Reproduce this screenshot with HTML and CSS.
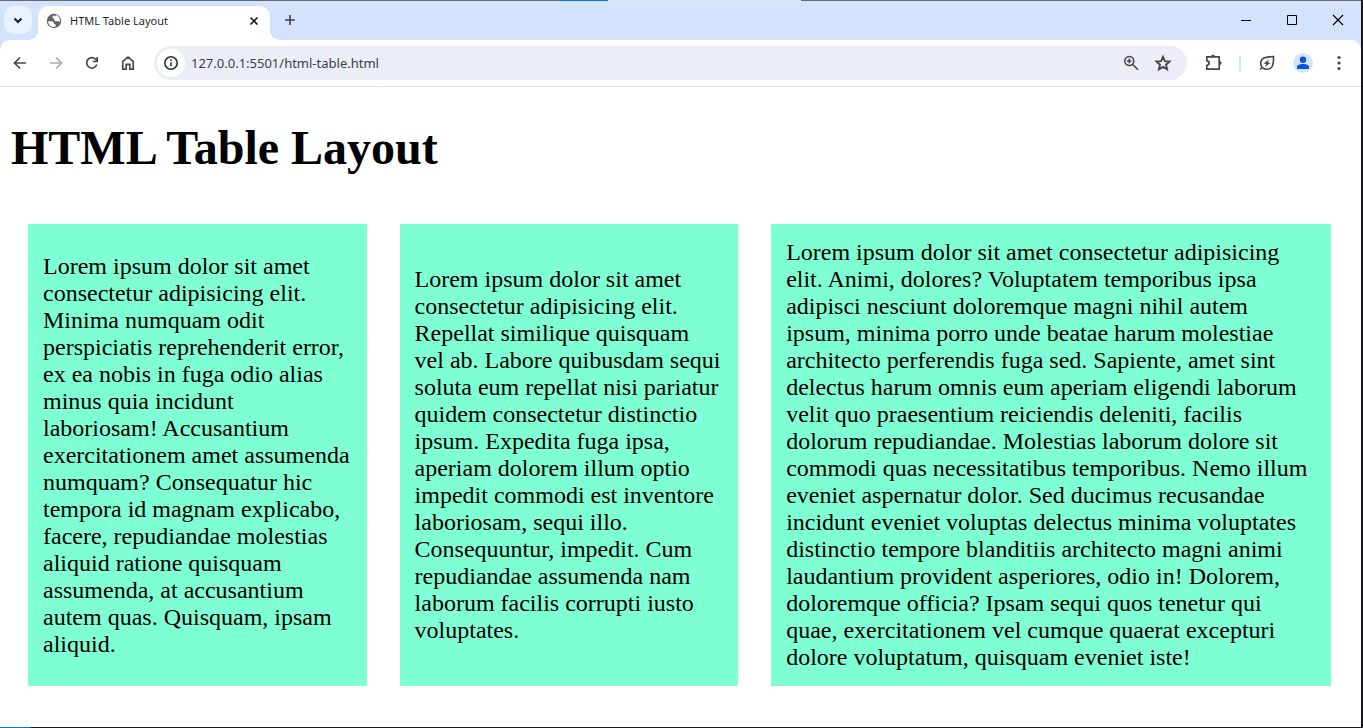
FILE: index.html
```html
<!DOCTYPE html>
<html lang="en">
<head>
<meta charset="utf-8">
<title>HTML Table Layout</title>
<link rel="stylesheet" href="styles.css">
</head>
<body>
<div class="window">
  <div class="desktop-strip"><span class="strip-accent"></span><span class="strip-light"></span></div>
  <header class="tab-bar">
    <button class="tab-search" aria-label="Search tabs"><svg width="28" height="28" viewBox="0 0 28 28"><path d="M10.500 12.500l3.500 3.500 3.500-3.500" fill="none" stroke="#1f1f1f" stroke-width="2"/></svg></button>
    <div class="tab">
      <svg width="16" height="16" viewBox="0 0 16 16"><circle cx="8" cy="8" r="7.200" fill="#5f6368"/><path d="M2 8.300h3.500c1.600 0 2.300.8 2.300 2v.7h1.700v2.800c-3 1-7.200-1-7.500-5.500zM7.800 2.200C6.800 3 6.300 3.700 6.500 4.700c.2.800.9 1.100 1.900 1.100v1.500c0 1 1.200 1 2.300 1h2c.6 0 1.100.3 1.300.9.500-3.800-1.800-6.500-4-7.100-.2 1-1.200 1.200-2 1.200z" fill="#fff"/></svg>
      <span class="tab-title">HTML Table Layout</span>
      <button class="tab-close" aria-label="Close tab"><svg width="16" height="16" viewBox="0 0 16 16"><path d="M4.500 4.500l7 7m0-7l-7 7" stroke="#1f1f1f" stroke-width="1.700"/></svg></button>
    </div>
    <button class="new-tab" aria-label="New tab"><svg width="20" height="20" viewBox="0 0 20 20"><path d="M10 5v10M5 10h10" stroke="#3c4043" stroke-width="1.600"/></svg></button>
    <div class="window-controls">
      <button class="control" aria-label="Minimize"><svg width="12" height="12" viewBox="0 0 12 12"><path d="M1 6.500h10" stroke="#000"/></svg></button>
      <button class="control" aria-label="Maximize"><svg width="12" height="12" viewBox="0 0 12 12"><path d="M1.500 1.500h9v9h-9z" fill="none" stroke="#000"/></svg></button>
      <button class="control" aria-label="Close"><svg width="12" height="12" viewBox="0 0 12 12"><path d="M1 1l10 10M11 1L1 11" stroke="#000" stroke-width="1.200"/></svg></button>
    </div>
  </header>
  <nav class="toolbar" aria-label="Browser toolbar">
    <button class="tool" aria-label="Back"><svg width="20" height="20" viewBox="0 0 20 20"><path d="M16 10H5m5-5.500L4.500 10l5.500 5.500" fill="none" stroke="#474747" stroke-width="1.700"/></svg></button>
    <button class="tool" aria-label="Forward" disabled><svg width="20" height="20" viewBox="0 0 20 20"><path d="M4 10h11m-5-5.500l5.500 5.500-5.500 5.500" fill="none" stroke="#aaa" stroke-width="1.700"/></svg></button>
    <button class="tool" aria-label="Reload"><svg width="20" height="20" viewBox="0 0 20 20"><path d="M14.800 11.500A5.200 5.200 0 1 1 14 6.700l1.200 1.500" fill="none" stroke="#474747" stroke-width="1.700"/><path d="M15.200 4v4.500h-4.500" fill="none" stroke="#474747" stroke-width="1.700"/></svg></button>
    <button class="tool" aria-label="Home"><svg width="20" height="20" viewBox="0 0 20 20"><path d="M4.800 8.300L10 4.200l5.200 4.100v7.900h-3.400v-4.800H8.200v4.800H4.800z" fill="none" stroke="#474747" stroke-width="1.700"/></svg></button>
    <div class="address">
      <button class="site-info" aria-label="Site information"><svg width="16" height="16" viewBox="0 0 16 16"><circle cx="8" cy="8" r="6.200" fill="none" stroke="#303030" stroke-width="1.600"/><path d="M8 7.200v4M8 4.300v1.600" stroke="#303030" stroke-width="1.600"/></svg></button>
      <input class="url" type="text" aria-label="Address" value="127.0.0.1:5501/html-table.html">
      <button class="address-action" aria-label="Zoom"><svg width="20" height="20" viewBox="0 0 20 20"><circle cx="8.300" cy="8" r="4.500" fill="none" stroke="#474747" stroke-width="1.600"/><path d="M11.500 11.200l5.500 5.500M6.100 8h4.400M8.300 5.800v4.400" stroke="#474747" stroke-width="1.600"/></svg></button>
      <button class="address-action" aria-label="Bookmark"><svg width="20" height="20" viewBox="0 0 20 20"><path d="M10 3.900l1.900 4.300 4.600.4-3.500 3.100 1.100 4.600L10 13.900l-4.100 2.400L7 11.700 3.500 8.600l4.600-.4z" fill="none" stroke="#474747" stroke-width="1.900"/></svg></button>
    </div>
    <button class="tool extensions" aria-label="Extensions"><svg width="20" height="20" viewBox="0 0 20 20"><path d="M2.800 3.800h12.400v12.400H2.800v-3.900c3.100-.2 3.100-4.200 0-4.400z" fill="none" stroke="#474747" stroke-width="1.700" stroke-linejoin="round"/><path d="M7 3.500c0-2.500 4-2.500 4 0zM15.500 8c2.700 0 2.700 4 0 4z" fill="#474747"/></svg></button>
    <span class="divider"></span>
    <button class="tool" aria-label="Energy saver"><svg width="20" height="20" viewBox="0 0 20 20"><path d="M16.500 3.500C10 3.800 3.700 4.300 3.700 10.500c0 3.400 2.700 5.800 6 5.800 6.400 0 7-5.900 6.800-12.800zM5.300 14.300l-2.200 2.200" fill="none" stroke="#474747" stroke-width="1.600"/><path d="M12.300 6.300L6.700 10.400l2.600.7-1.400 3 5.500-4.200-2.600-.7z" fill="#474747"/></svg></button>
    <button class="tool" aria-label="Profile"><svg width="20" height="20" viewBox="0 0 20 20"><circle cx="10" cy="10" r="10" fill="#d3e3fd"/><circle cx="10" cy="6.800" r="3.200" fill="#0b57d0"/><path d="M4 16v-2c0-2.200 3.500-3 6-3s6 .8 6 3v2z" fill="#0b57d0"/></svg></button>
    <button class="tool" aria-label="Menu"><svg width="20" height="20" viewBox="0 0 20 20"><g fill="#474747"><circle cx="10" cy="4.500" r="1.600"/><circle cx="10" cy="10" r="1.600"/><circle cx="10" cy="15.500" r="1.600"/></g></svg></button>
  </nav>
  <main class="page">
    <h1 class="heading">HTML Table Layout</h1>
    <table class="layout">
      <colgroup><col class="narrow"><col class="narrow"><col></colgroup>
      <tr>
        <td class="cell">Lorem ipsum dolor sit amet consectetur adipisicing elit. Minima numquam odit perspiciatis reprehenderit error, ex ea nobis in fuga odio alias minus quia incidunt laboriosam! Accusantium exercitationem amet assumenda numquam? Consequatur hic tempora id magnam explicabo, facere, repudiandae molestias aliquid ratione quisquam assumenda, at accusantium autem quas. Quisquam, ipsam aliquid.</td>
        <td class="cell">Lorem ipsum dolor sit amet consectetur adipisicing elit. Repellat similique quisquam vel ab. Labore quibusdam sequi soluta eum repellat nisi pariatur quidem consectetur distinctio ipsum. Expedita fuga ipsa, aperiam dolorem illum optio impedit commodi est inventore laboriosam, sequi illo. Consequuntur, impedit. Cum repudiandae assumenda nam laborum facilis corrupti iusto voluptates.</td>
        <td class="cell">Lorem ipsum dolor sit amet consectetur adipisicing elit. Animi, dolores? Voluptatem temporibus ipsa adipisci nesciunt doloremque magni nihil autem ipsum, minima porro unde beatae harum molestiae architecto perferendis fuga sed. Sapiente, amet sint delectus harum omnis eum aperiam eligendi laborum velit quo praesentium reiciendis deleniti, facilis dolorum repudiandae. Molestias laborum dolore sit commodi quas necessitatibus temporibus. Nemo illum eveniet aspernatur dolor. Sed ducimus recusandae incidunt eveniet voluptas delectus minima voluptates distinctio tempore blanditiis architecto magni animi laudantium provident asperiores, odio in! Dolorem, doloremque officia? Ipsam sequi quos tenetur qui quae, exercitationem vel cumque quaerat excepturi dolore voluptatum, quisquam eveniet iste!</td>
      </tr>
    </table>
  </main>
  <div class="bottom-strip"><span class="bottom-accent"></span></div>
</div>
</body>
</html>
```
FILE: styles.css
```css
* { box-sizing: border-box; }
body { margin: 0; background: #fff; }
button { display: grid; place-items: center; flex: none; padding: 0; border: 0; background: none; }
svg { display: block; flex: none; }

.window {
  display: flex;
  flex-direction: column;
  min-height: 100vh;
  border-right: 2px solid #16181b;
  background: #fff;
  font-family: "Noto Sans", "Open Sans", sans-serif;
}

.desktop-strip { display: flex; height: 1px; padding-left: 560px; background: #666876; }
.strip-accent { width: 48px; background: #0078d7; }
.strip-light { width: 193px; background: #e2e2e4; }

.tab-bar { display: flex; align-items: flex-start; height: 49px; margin-bottom: -10px; padding: 5px 0 0 4px; background: #d3e3fd; }
.tab-search { width: 28px; height: 28px; margin-right: 6px; border-radius: 10px; background: #e9f1fe; }
.tab {
  position: relative;
  display: flex;
  align-items: center;
  width: 232px;
  height: 34px;
  padding: 0 8px 4px;
  border-radius: 10px 10px 0 0;
  background: #fff;
}
.tab::before, .tab::after { content: ""; position: absolute; bottom: 0; width: 10px; height: 10px; }
.tab::before { right: 100%; background: radial-gradient(circle at 0 0, transparent 10px, #fff 10px); }
.tab::after { left: 100%; background: radial-gradient(circle at 100% 0, transparent 10px, #fff 10px); }
.tab-title { flex: 1; margin-left: 8px; color: #1f1f1f; font-size: 11px; line-height: 16px; white-space: nowrap; }
.tab-close { width: 16px; height: 16px; }
.new-tab { width: 28px; height: 28px; margin-left: 6px; }
.window-controls { display: flex; margin-left: auto; }
.control { width: 46px; height: 28px; }

.toolbar {
  position: relative;
  display: flex;
  align-items: center;
  gap: 8px;
  height: 47px;
  padding: 0 8px 0 6px;
  border-bottom: 1px solid #dfe1e5;
  border-radius: 10px 10px 0 0;
  background: #fff;
}
.tool { width: 28px; height: 28px; }
.address { display: flex; flex: 1; align-items: center; height: 34px; margin-left: 4px; padding: 0 8px 0 3px; border-radius: 17px; background: #ebeef7; }
.site-info { width: 28px; height: 28px; border-radius: 50%; background: #fff; }
.url { flex: 1; min-width: 0; margin: 0; padding: 0 6px; border: 0; outline: 0; background: none; color: #3c4043; font: 13px/20px "Noto Sans", "Open Sans", sans-serif; }
.address-action { width: 32px; height: 28px; }
.extensions { margin-left: 5px; }
.divider { width: 2px; height: 16px; margin: 0 4px 0 3px; background: #d3e3fd; }

.page { flex: 1; padding: 33px 13px 0 11px; color: #000; font-family: "Liberation Serif", "Times New Roman", serif; }
.heading { margin: 0 0 33px; font-size: 48px; line-height: 55px; }
.layout { width: 100%; table-layout: fixed; border-spacing: 1px 0; margin: 0; }
.layout .narrow { width: 27.8%; }
.cell { padding: 15px; border: 16px solid transparent; background: #7fffd4; background-clip: padding-box; font-size: 24px; line-height: 27px; vertical-align: middle; }

.bottom-strip { display: flex; height: 1px; background: #1b1b1f; }
.bottom-accent { width: 31px; background: #0078d7; }
```
